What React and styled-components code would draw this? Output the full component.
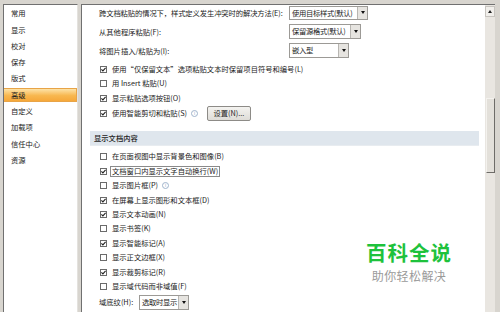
import React from 'react'
import styled, { createGlobalStyle } from 'styled-components'

const GlobalStyle = createGlobalStyle`
  html, body {
    margin: 0;
    padding: 0;
  }
  body {
    background: #d8d5cf;
    font-family: "Noto Sans CJK SC", "DejaVu Sans", sans-serif;
    font-size: 7.3px;
    color: #222;
    overflow: hidden;
  }
`

const Window = styled.div`
  position: relative;
  display: flex;
  gap: 3px;
  height: 312px;
  padding: 4px 5px 0 3px;
  box-sizing: border-box;
`

const Nav = styled.div`
  width: 75px;
  flex-shrink: 0;
  background: #fff;
  border-left: 1px solid #707070;
  border-top: 1px solid #707070;
  border-right: 1px solid #e4e2de;
  padding-top: 1.3px;
  box-sizing: border-box;
`

const NavItem = styled.div`
  height: 14px;
  margin-bottom: 2.3px;
  padding-left: 7px;
  box-sizing: border-box;
  background: ${(p) => (p.$active ? 'linear-gradient(#fde3a8, #f8b74f 55%, #f6a83a)' : 'transparent')};
  border: 1px solid ${(p) => (p.$active ? '#e8a447' : 'transparent')};
  border-left: none;
  line-height: 12px;
`

const Main = styled.div`
  flex: 1;
  display: flex;
  background: #fff;
  border-left: 1px solid #707070;
  border-top: 1px solid #707070;
`

const Content = styled.div`
  flex: 1;
  display: flex;
  flex-direction: column;
`

const SelectRow = styled.div`
  display: flex;
  align-items: center;
  height: 15px;
  margin-bottom: 4px;
  padding-left: 17px;
`

const Label = styled.span`
  width: ${(p) => p.$w}px;
  flex-shrink: 0;
  white-space: nowrap;
  letter-spacing: ${(p) => p.$tight ? '-0.1px' : '0'};
`

const Select = styled.div`
  display: flex;
  width: ${(p) => p.$w}px;
  height: ${(p) => p.$h || 14}px;
  border: 1px solid #9c9a96;
  box-sizing: border-box;
  background: #fff;
`

const SelectText = styled.span`
  flex: 1;
  padding-left: 2px;
  line-height: 12px;
  white-space: nowrap;
  overflow: hidden;
  letter-spacing: -0.3px;
`

const SelectButton = styled.span`
  width: 9px;
  flex-shrink: 0;
  display: flex;
  align-items: center;
  justify-content: center;
  background: #e6e4e0;
  border-left: 1px solid #b8b6b2;
  &::after {
    content: '';
    border-left: 2.5px solid transparent;
    border-right: 2.5px solid transparent;
    border-top: 3px solid #111;
  }
`

const CheckRow = styled.div`
  display: flex;
  align-items: center;
  height: ${(p) => p.$h}px;
  padding-left: 18px;
  white-space: nowrap;
`

const Box = styled.span`
  width: 7px;
  height: 7px;
  flex-shrink: 0;
  margin-right: 4px;
  border: 1px solid #6b6b6b;
  box-sizing: border-box;
  background: #fff;
  display: flex;
  align-items: center;
  justify-content: center;
`

const Text = styled.span`
  padding: 0 1px;
  border: 1px solid ${(p) => (p.$focus ? '#8a8a8a' : 'transparent')};
  line-height: 9px;
  margin-left: -1px;
`

const Info = styled.span`
  width: 5px;
  height: 5px;
  margin-left: 2px;
  border: 1px solid #9fb4cc;
  border-radius: 50%;
  color: #8aa3c0;
  font-size: 4px;
  line-height: 5px;
  text-align: center;
`

const Button = styled.div`
  margin-left: 9px;
  width: 44px;
  height: 15px;
  line-height: 13px;
  text-align: center;
  box-sizing: border-box;
  border: 1px solid #8d8b87;
  border-radius: 2px;
  background: linear-gradient(#f4f3f0, #dedcd7);
`

const Header = styled.div`
  margin: 10.6px 6px 3.8px 8px;
  height: 15px;
  line-height: 15px;
  padding-left: 4px;
  background: #dfe6ed;
  border-bottom: 1px solid #e8ecf0;
  box-sizing: border-box;
  font-weight: 500;
`

const FieldRow = styled.div`
  display: flex;
  align-items: center;
  height: 15px;
  margin-top: 1px;
  padding-left: 17px;
`

const Scrollbar = styled.div`
  width: 10px;
  flex-shrink: 0;
  background: #e9e6e1;
  display: flex;
  flex-direction: column;
`

const ScrollUp = styled.div`
  height: 11px;
  margin-top: 1px;
  background: #f1efeb;
  border: 1px solid #c7c4bf;
  box-sizing: border-box;
  display: flex;
  align-items: center;
  justify-content: center;
  &::after {
    content: '';
    border-left: 2.5px solid transparent;
    border-right: 2.5px solid transparent;
    border-bottom: 3px solid #222;
  }
`

const Thumb = styled.div`
  margin-top: 81px;
  height: 75px;
  margin-left: 1px;
  background: #e3e0da;
  border: 1px solid #f4f2ee;
  border-right-color: #6e6c68;
  border-bottom-color: #6e6c68;
  box-sizing: border-box;
`

const Watermark = styled.div`
  position: absolute;
  left: 366px;
  top: 237px;
  display: flex;
  flex-direction: column;
  align-items: center;
`

const Brand = styled.div`
  color: #1ec23c;
  font-size: 20.5px;
  font-weight: 700;
  line-height: 30px;
  letter-spacing: 1px;
`

const Slogan = styled.div`
  color: #9a9a9a;
  font-size: 12px;
  line-height: 18px;
  letter-spacing: 0.4px;
`

const Check = () => (
  <svg width="5" height="5" viewBox="0 0 5 5">
    <path d="M0.4 2.4 L1.9 3.9 L4.6 0.8" fill="none" stroke="#222" strokeWidth="1.1" />
  </svg>
)

const CheckItem = ({ checked, children, h, focus, info, extra }) => (
  <CheckRow $h={h}>
    <Box>{checked && <Check />}</Box>
    <Text $focus={focus}>{children}</Text>
    {info && <Info>i</Info>}
    {extra}
  </CheckRow>
)

const navItems = ['常用', '显示', '校对', '保存', '版式', '高级', '自定义', '加载项', '信任中心', '资源']

const pasteOptions = [
  { label: '跨文档粘贴的情况下，样式定义发生冲突时的解决方法(E):', value: '使用目标样式(默认)', w: 79 },
  { label: '从其他程序粘贴(F):', value: '保留源格式(默认)', w: 72, h: 15 },
  { label: '将图片插入/粘贴为(I):', value: '嵌入型', w: 60, h: 15 },
]

const displayOptions = [
  { text: '在页面视图中显示背景色和图像(B)', checked: false },
  { text: '文档窗口内显示文字自动换行(W)', checked: true, focus: true },
  { text: '显示图片框(P)', checked: false, info: true },
  { text: '在屏幕上显示图形和文本框(D)', checked: true },
  { text: '显示文本动画(N)', checked: true },
  { text: '显示书签(K)', checked: false },
  { text: '显示智能标记(A)', checked: true },
  { text: '显示正文边框(X)', checked: false },
  { text: '显示裁剪标记(R)', checked: true },
  { text: '显示域代码而非域值(F)', checked: false },
]

export default function App() {
  return (
    <>
      <GlobalStyle />
      <Window>
        <Nav>
          {navItems.map((n) => (
            <NavItem key={n} $active={n === '高级'}>{n}</NavItem>
          ))}
        </Nav>
        <Main>
          <Content>
            {pasteOptions.map((o, i) => (
              <SelectRow key={o.label}>
                <Label $w={190} $tight={i === 0}>{o.label}</Label>
                <Select $w={o.w} $h={o.h}>
                  <SelectText>{o.value}</SelectText>
                  <SelectButton />
                </Select>
              </SelectRow>
            ))}
            <CheckItem h={14.6} checked>使用“仅保留文本”选项粘贴文本时保留项目符号和编号(L)</CheckItem>
            <CheckItem h={14.6}>用 Insert 粘贴(U)</CheckItem>
            <CheckItem h={14.6} checked>显示粘贴选项按钮(O)</CheckItem>
            <CheckItem h={14.6} checked info extra={<Button>设置(N)...</Button>}>
              使用智能剪切和粘贴(S)
            </CheckItem>
            <Header>显示文档内容</Header>
            {displayOptions.map((o) => (
              <CheckItem key={o.text} h={14.4} checked={o.checked} focus={o.focus} info={o.info}>
                {o.text}
              </CheckItem>
            ))}
            <FieldRow>
              <Label $w={40}>域底纹(H):</Label>
              <Select $w={50} $h={15}>
                <SelectText>选取时显示</SelectText>
                <SelectButton />
              </Select>
            </FieldRow>
          </Content>
          <Scrollbar>
            <ScrollUp />
            <Thumb />
          </Scrollbar>
        </Main>
        <Watermark>
          <Brand>百科全说</Brand>
          <Slogan>助你轻松解决</Slogan>
        </Watermark>
      </Window>
    </>
  )
}
